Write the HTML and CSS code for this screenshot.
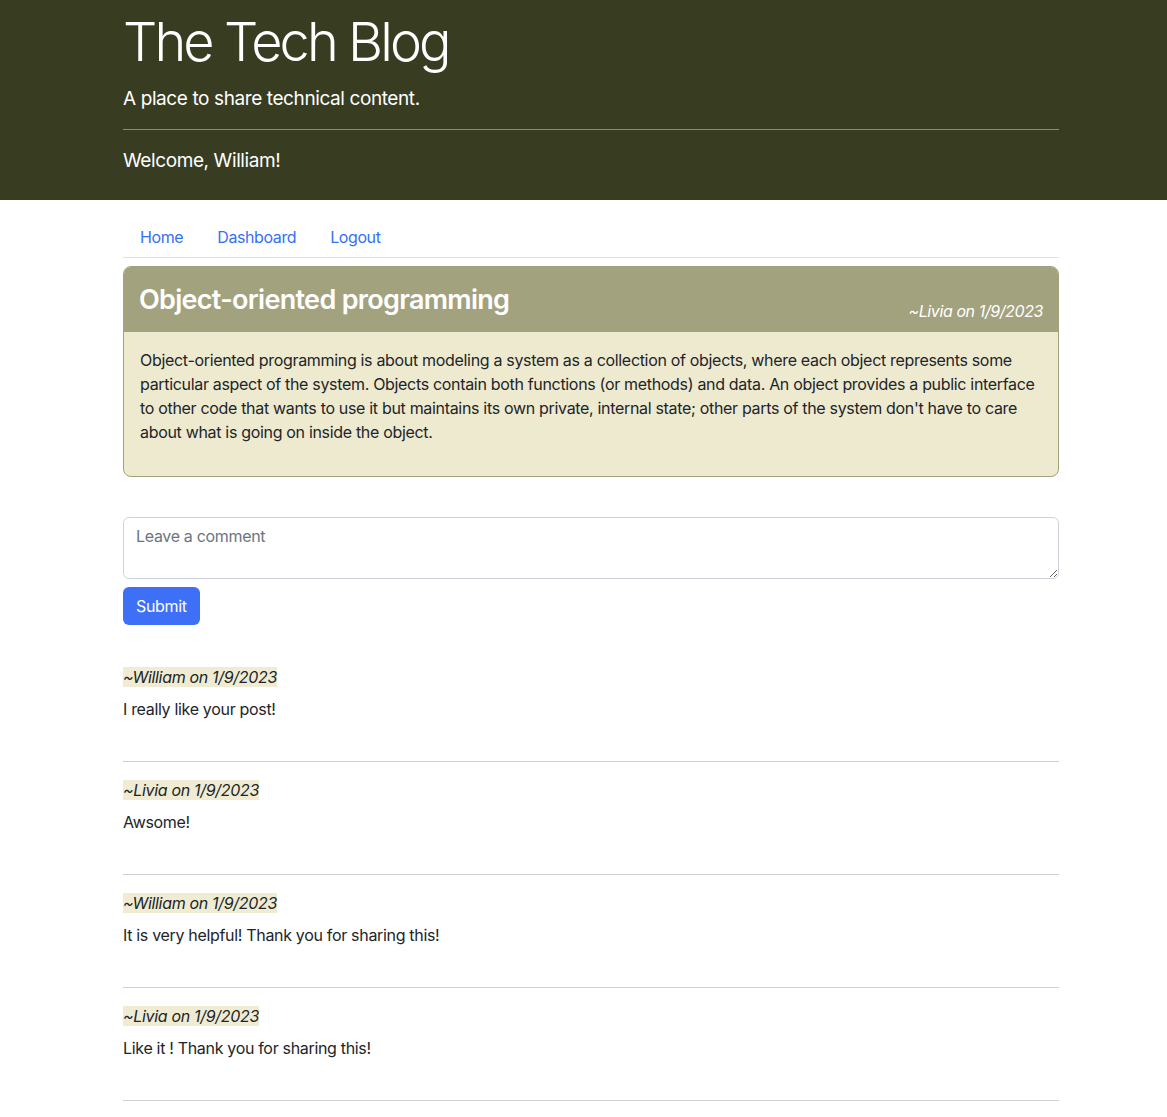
FILE: index.html
```html
<!DOCTYPE html>
<html lang="en">
<head>
<meta charset="utf-8">
<title>The Tech Blog</title>
<link rel="stylesheet" href="styles.css">
</head>
<body>
<header class="site-header">
  <div class="container">
    <h1 class="site-title">The Tech Blog</h1>
    <p class="site-lead">A place to share technical content.</p>
    <hr class="header-rule">
    <p class="welcome">Welcome, William!</p>
  </div>
</header>
<nav class="container">
  <ul class="nav-tabs">
    <li><a href="#">Home</a></li>
    <li><a href="#">Dashboard</a></li>
    <li><a href="#">Logout</a></li>
  </ul>
</nav>
<main class="container">
  <article class="post-card">
    <div class="post-header">
      <h2 class="post-title">Object-oriented programming</h2>
      <span class="post-meta">~Livia on 1/9/2023</span>
    </div>
    <div class="post-body">
      <p>Object-oriented programming is about modeling a system as a collection of objects, where each object represents some particular aspect of the system. Objects contain both functions (or methods) and data. An object provides a public interface to other code that wants to use it but maintains its own private, internal state; other parts of the system don't have to care about what is going on inside the object.</p>
    </div>
  </article>
  <form class="comment-form">
    <textarea class="comment-input" placeholder="Leave a comment"></textarea>
    <button type="button" class="btn-submit">Submit</button>
  </form>
  <section class="comments">
    <div class="comment">
      <p class="comment-meta"><mark>~William on 1/9/2023</mark></p>
      <p class="comment-text">I really like your post!</p>
    </div>
    <div class="comment">
      <p class="comment-meta"><mark>~Livia on 1/9/2023</mark></p>
      <p class="comment-text">Awsome!</p>
    </div>
    <div class="comment">
      <p class="comment-meta"><mark>~William on 1/9/2023</mark></p>
      <p class="comment-text">It is very helpful! Thank you for sharing this!</p>
    </div>
    <div class="comment">
      <p class="comment-meta"><mark>~Livia on 1/9/2023</mark></p>
      <p class="comment-text">Like it ! Thank you for sharing this!</p>
    </div>
  </section>
</main>
</body>
</html>
```

FILE: styles.css
```css
* { box-sizing: border-box; }
html, body {
  margin: 0;
  padding: 0;
}
body {
  font-family: Inter, "Liberation Sans", Arial, sans-serif;
  font-size: 16px;
  line-height: 1.5;
  letter-spacing: -0.32px;
  color: #212529;
  background: #fff;
}
.container {
  width: 936px;
  margin-left: 123px;
}
.site-header {
  background: #383d22;
  color: #fff;
  padding: 10px 0 24px;
}
.site-title {
  margin: 0;
  font-size: 54px;
  font-weight: 300;
  line-height: 1.2;
  letter-spacing: -2.9px;
}
.site-lead {
  margin: 10px 0 0;
  font-size: 19px;
  font-weight: 400;
  line-height: 1.5;
  letter-spacing: -0.4px;
}
.header-rule {
  margin: 16px 0 17px;
  border: 0;
  border-top: 1px solid #8a8c78;
}
.welcome {
  margin: 0;
  font-size: 19px;
  line-height: 1.5;
  letter-spacing: -0.4px;
}
.nav-tabs {
  list-style: none;
  margin: 17px 0 8px;
  padding: 0;
  display: flex;
  border-bottom: 1px solid #dee2e6;
}
.nav-tabs a {
  display: block;
  padding: 8px 17px;
  color: #3670f5;
  text-decoration: none;
  font-size: 16px;
  letter-spacing: -0.4px;
}
.post-card {
  border: 1px solid #a3a27f;
  border-radius: 8px;
  overflow: hidden;
  background: #eeead0;
}
.post-header {
  background: #a3a27f;
  color: #fff;
  display: flex;
  justify-content: space-between;
  align-items: flex-end;
  padding: 17px 15px 9px;
}
.post-title {
  margin: 0 0 7px;
  font-size: 27px;
  font-weight: 600;
  line-height: 1.2;
  letter-spacing: -0.7px;
}
.post-meta {
  font-style: italic;
  font-size: 16px;
  letter-spacing: -0.4px;
}
.post-body {
  padding: 16px;
}
.post-body p {
  margin: 0 0 16px;
}
.comment-form {
  margin-top: 40px;
  display: flex;
  flex-direction: column;
  align-items: flex-start;
  gap: 8px;
}
.comment-input {
  width: 100%;
  height: 62px;
  border: 1px solid #ced4da;
  border-radius: 6px;
  padding: 6px 12px;
  font-family: inherit;
  font-size: 16px;
  line-height: 1.5;
  letter-spacing: -0.32px;
  resize: vertical;
}
.comment-input::placeholder {
  color: #6c757d;
}
.btn-submit {
  background: #3d6ff7;
  color: #fff;
  border: 0;
  border-radius: 6px;
  padding: 0 13px;
  height: 38px;
  font-family: inherit;
  font-size: 16px;
  line-height: 1.5;
  letter-spacing: -0.32px;
}
.comments {
  margin-top: 40px;
}
.comment {
  border-bottom: 1px solid #cfcfcf;
  padding-bottom: 40px;
  margin-bottom: 16px;
}
.comment-meta {
  margin: 0 0 8px;
  font-style: italic;
}
.comment-meta mark {
  background: #efecd3;
  color: #212529;
  padding: 0;
}
.comment-text {
  margin: 0;
}
```
